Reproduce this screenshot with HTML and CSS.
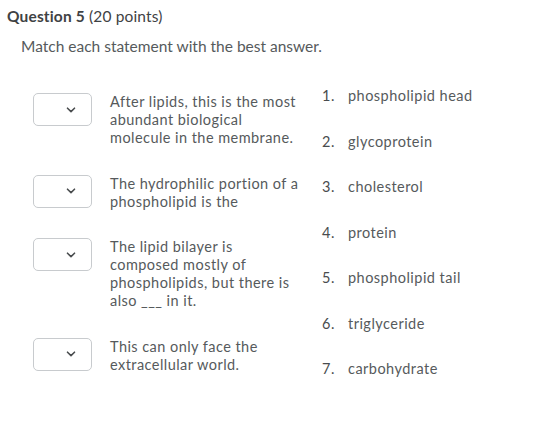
FILE: index.html
```html
<!DOCTYPE html>
<html>
<head>
<meta charset="utf-8">
<link rel="stylesheet" href="styles.css">
</head>
<body>
<div class="page">
  <h2 class="title"><span class="qnum">Question 5</span> (20 points)</h2>
  <p class="prompt">Match each statement with the best answer.</p>
  <div class="match">
    <div class="statements">
      <div class="row">
        <div class="select"><svg width="10" height="6" viewBox="0 0 10 6"><path d="M1.5 1.2 L5 4.6 L8.5 1.2" fill="none" stroke="#494c4e" stroke-width="1.6" stroke-linecap="round" stroke-linejoin="round"/></svg></div>
        <div class="stmt">After lipids, this is the most abundant biological molecule in the membrane.</div>
      </div>
      <div class="row">
        <div class="select"><svg width="10" height="6" viewBox="0 0 10 6"><path d="M1.5 1.2 L5 4.6 L8.5 1.2" fill="none" stroke="#494c4e" stroke-width="1.6" stroke-linecap="round" stroke-linejoin="round"/></svg></div>
        <div class="stmt">The hydrophilic portion of a phospholipid is the</div>
      </div>
      <div class="row">
        <div class="select"><svg width="10" height="6" viewBox="0 0 10 6"><path d="M1.5 1.2 L5 4.6 L8.5 1.2" fill="none" stroke="#494c4e" stroke-width="1.6" stroke-linecap="round" stroke-linejoin="round"/></svg></div>
        <div class="stmt">The lipid bilayer is composed mostly of phospholipids, but there is also ___ in it.</div>
      </div>
      <div class="row">
        <div class="select"><svg width="10" height="6" viewBox="0 0 10 6"><path d="M1.5 1.2 L5 4.6 L8.5 1.2" fill="none" stroke="#494c4e" stroke-width="1.6" stroke-linecap="round" stroke-linejoin="round"/></svg></div>
        <div class="stmt">This can only face the extracellular world.</div>
      </div>
    </div>
    <ol class="answers">
      <li><span class="num">1.</span><span>phospholipid head</span></li>
      <li><span class="num">2.</span><span>glycoprotein</span></li>
      <li><span class="num">3.</span><span>cholesterol</span></li>
      <li><span class="num">4.</span><span>protein</span></li>
      <li><span class="num">5.</span><span>phospholipid tail</span></li>
      <li><span class="num">6.</span><span>triglyceride</span></li>
      <li><span class="num">7.</span><span>carbohydrate</span></li>
    </ol>
  </div>
</div>
</body>
</html>
```
FILE: styles.css
```css
* { box-sizing: border-box; }
body {
  margin: 0;
  background: #fff;
  font-family: Lato, "Noto Sans", sans-serif;
  color: #494c4e;
}
.page {
  padding: 6px 0 0 7px;
}
.title {
  margin: 0;
  font-size: 15.5px;
  font-weight: 400;
  line-height: 20px;
  letter-spacing: 0.15px;
  color: #3f4244;
}
.qnum {
  font-weight: 700;
}
.prompt {
  margin: 10px 0 0 14px;
  font-size: 15.5px;
  line-height: 20px;
  color: #565a5c;
}
.match {
  display: flex;
  margin: 37px 0 0 26px;
}
.statements {
  display: flex;
  flex-direction: column;
  gap: 27.5px;
  width: 289px;
}
.row {
  display: flex;
  align-items: flex-start;
}
.select {
  width: 59px;
  height: 33px;
  border: 1px solid #c8cbce;
  border-radius: 5px;
  display: flex;
  align-items: center;
  justify-content: flex-end;
  padding-right: 15px;
  flex: none;
}
.stmt {
  margin-left: 18px;
  width: 194px;
  font-size: 14.5px;
  line-height: 18px;
  letter-spacing: 0.45px;
  color: #565a5c;
}
.answers {
  list-style: none;
  margin: -7px 0 0 0;
  padding: 0;
  display: flex;
  flex-direction: column;
  gap: 26.5px;
}
.answers li {
  display: flex;
  font-size: 14.5px;
  line-height: 19px;
  letter-spacing: 0.47px;
  color: #565a5c;
}
.num {
  width: 26px;
  color: #494c4e;
}
```
